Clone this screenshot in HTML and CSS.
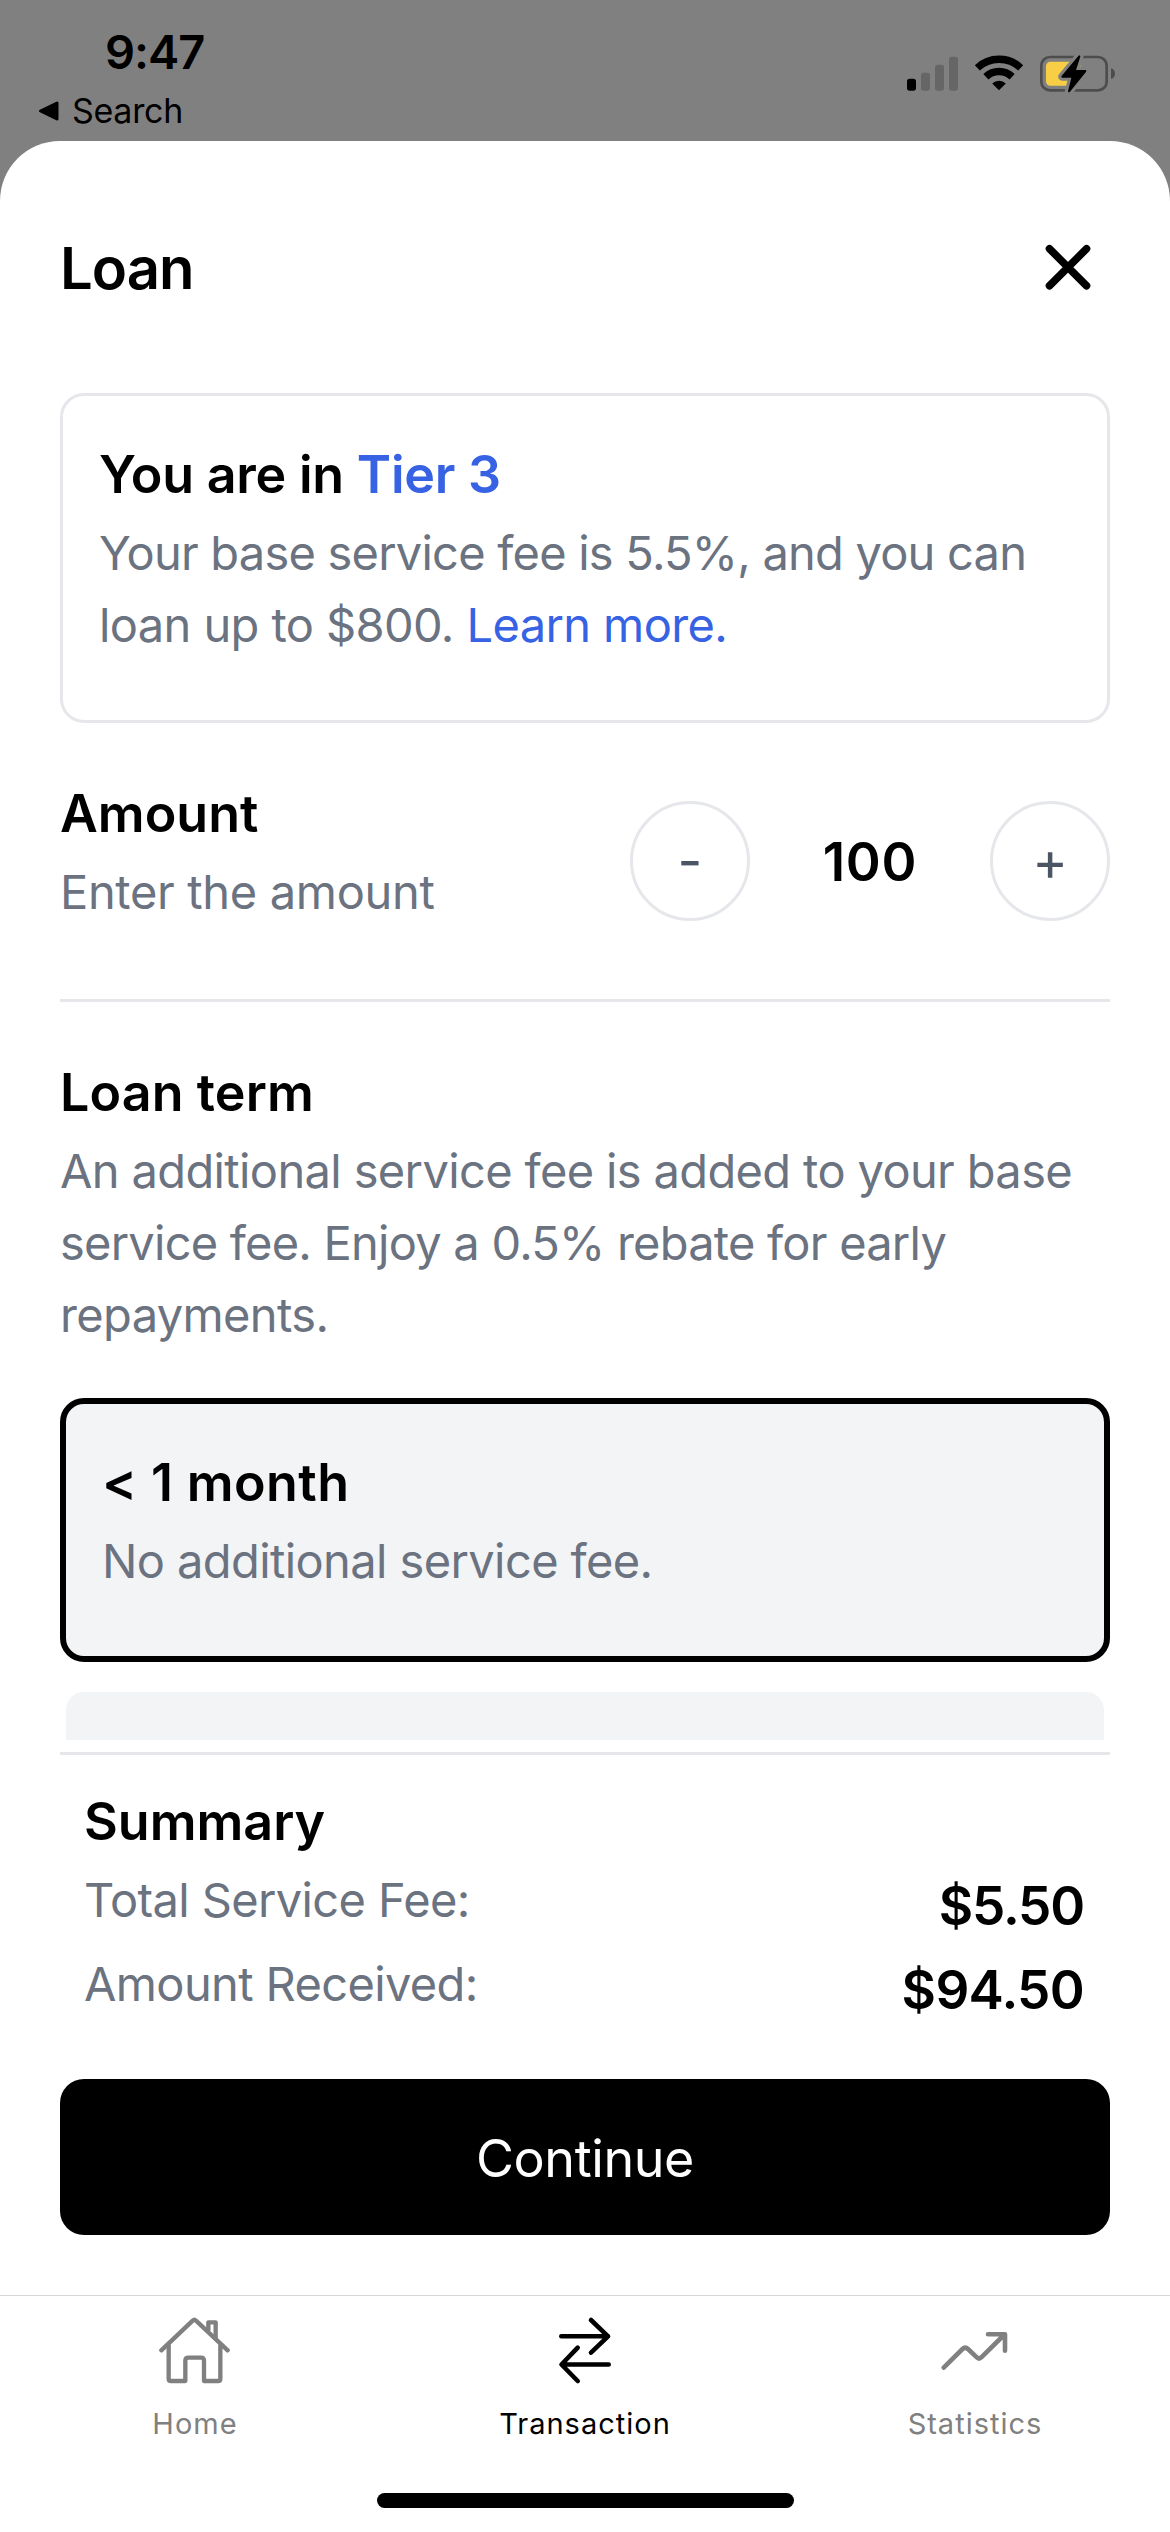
FILE: index.html
```html
<!DOCTYPE html>
<html lang="en">
<head>
<meta charset="utf-8">
<title>Loan</title>
<link rel="stylesheet" href="styles.css">
</head>
<body>
<div class="screen">
  <header class="status">
    <div class="status-left">
      <div class="time">9:47</div>
      <div class="back">
        <svg width="22" height="22" viewBox="0 0 22 22"><path d="M2.500 11 L19 3 V19 Z" fill="#000" stroke="#000" stroke-width="3" stroke-linejoin="round"/></svg>
        <span>Search</span>
      </div>
    </div>
    <svg class="status-icons" viewBox="105 160 636 126">
      <rect x="111" y="237" width="27" height="36" rx="8"/>
      <g fill="#666">
        <rect x="153" y="219" width="27" height="54" rx="8"/>
        <rect x="195" y="195" width="27" height="78" rx="8"/>
        <rect x="237" y="171" width="27" height="102" rx="8"/>
      </g>
      <g fill="none" stroke="#000" stroke-width="22">
        <path d="M322 204.500 A95 95 0 0 1 452 204.500"/>
        <path d="M347.500 231.300 A57.500 57.500 0 0 1 426.500 231.300"/>
      </g>
      <path d="M387 272 L366.500 251.500 A30 30 0 0 1 407.500 251.500 Z"/>
      <rect x="514" y="172" width="196" height="100" rx="26" fill="none" stroke="#4d4d4d" stroke-width="8"/>
      <path d="M723 206 Q735 210 735 222 Q735 234 723 238 Z" fill="#4d4d4d"/>
      <rect x="528" y="186" width="105" height="72" rx="13" fill="#f7ce46"/>
      <path d="M628 170 L577 231 H608 L597 275 L646 214 H614 Z" fill="#808080" stroke="#808080" stroke-width="25" stroke-linejoin="round"/>
      <path d="M628 170 L577 231 H608 L597 275 L646 214 H614 Z" stroke="#000" stroke-width="6" stroke-linejoin="round"/>
    </svg>
  </header>

  <main class="sheet">
    <div class="sheet-head">
      <h1>Loan</h1>
      <svg width="48" height="48" viewBox="0 0 48 48"><path d="M5.500 4.800 L42.500 41.800 M42.500 4.800 L5.500 41.800" stroke="#000" stroke-width="7.600" stroke-linecap="round"/></svg>
    </div>

    <section class="card">
      <h2 class="tier">You are in <span class="blue">Tier 3</span></h2>
      <p class="copy"><span class="fee">Your base service fee is 5.5%, and you can</span><br>loan up to $800. <span class="blue">Learn more.</span></p>
    </section>

    <section class="amount">
      <div>
        <h2>Amount</h2>
        <p class="hint">Enter the amount</p>
      </div>
      <div class="stepper">
        <button class="round">-</button>
        <span class="value">100</span>
        <button class="round">+</button>
      </div>
    </section>

    <section class="term">
      <h2 class="term-title">Loan term</h2>
      <p>An additional service fee is added to your base<br><span class="rebate">service fee. Enjoy a 0.5% rebate for early</span><br>repayments.</p>
    </section>

    <div class="options">
      <div class="option selected">
        <h2 class="month">&lt; 1 month</h2>
        <p>No additional service fee.</p>
      </div>
      <div class="option"></div>
    </div>

    <section class="summary">
      <h2>Summary</h2>
      <div class="line"><p>Total Service Fee:</p><strong>$5.50</strong></div>
      <div class="line"><p>Amount Received:</p><strong class="received">$94.50</strong></div>
    </section>

    <button class="continue">Continue</button>
  </main>

  <nav class="tabs">
    <div class="tab">
      <svg width="74" height="70" viewBox="174 138 222 210"><g fill="none" stroke="#808080" stroke-width="13" stroke-linecap="round" stroke-linejoin="round"><path d="M184 241 L278 152 Q283 147 288 152 L383 241"/><path d="M206 225 V326 Q206 333 213 333 H256 V272 Q256 263 265 263 H303 Q312 263 312 272 V333 H354 Q361 333 361 326 V225"/><path d="M325 180 V157 H347 V203"/></g></svg>
      <span>Home</span>
    </div>
    <div class="tab active">
      <svg width="74" height="70" viewBox="0 0 74 70"><path d="M13.300 20.300 H60 M43 4 L60 20.300 L43 36.600 M60.700 48.500 H14 M29.700 31.700 L13.500 48.500 L29.700 65" fill="none" stroke="#000" stroke-width="4.600" stroke-linecap="round" stroke-linejoin="round"/></svg>
      <span>Transaction</span>
    </div>
    <div class="tab">
      <svg width="74" height="70" viewBox="0 0 74 70"><path d="M5.700 51.700 L24.500 33 Q27.200 30.500 30 33 L38.500 41.200 Q41 43.700 43.600 41.200 L66.500 18.500 M50 18.200 H67 V34.800" fill="none" stroke="#808080" stroke-width="4.600" stroke-linecap="round" stroke-linejoin="round"/></svg>
      <span>Statistics</span>
    </div>
  </nav>
  <div class="home-indicator"></div>
</div>
</body>
</html>
```
FILE: styles.css
```css
* { box-sizing: border-box; margin: 0; padding: 0; }

body { background: #808080; color: #000; font-family: Inter, "Liberation Sans", sans-serif; }
svg { display: block; flex: none; }
button { font-family: inherit; }

.screen { width: 1170px; height: 2532px; display: flex; flex-direction: column; background: linear-gradient(#808080 300px, #fff 300px); overflow: hidden; }

.status { height: 141px; flex: none; display: flex; justify-content: space-between; padding: 24px 53px 0 38px; }
.time { font-size: 47px; line-height: 56px; font-weight: 600; letter-spacing: -1px; padding-left: 67px; }
.back { display: flex; align-items: center; gap: 12px; margin-top: 11px; font-size: 34px; line-height: 40px; letter-spacing: -.3px; }
.status-icons { width: 212px; height: 42px; margin-top: 29px; }

.sheet { flex: none; height: 2154px; background: #fff; border-radius: 60px 60px 0 0; padding: 91px 60px 0; }
.sheet-head { display: flex; justify-content: space-between; align-items: center; height: 72px; padding-right: 18px; }
h1 { font-size: 58px; line-height: 72px; font-weight: 600; letter-spacing: -1px; }
h2 { font-size: 52px; line-height: 84px; font-weight: 600; letter-spacing: 0; }
p { font-size: 47px; line-height: 72px; color: #6b7280; letter-spacing: -.63px; white-space: nowrap; }
.blue { color: #3662e3; }

.card { height: 330px; margin-top: 89px; border: 3px solid #e5e7eb; border-radius: 24px; padding: 37px 36px 0; }
.tier { letter-spacing: -.23px; }
.copy { letter-spacing: -.6px; }
.fee { letter-spacing: -.77px; }

.amount { display: flex; justify-content: space-between; align-items: flex-start; margin-top: 49px; padding-bottom: 71px; border-bottom: 3px solid #e5e7eb; }
.hint { letter-spacing: -.33px; }
.stepper { display: flex; align-items: center; margin-top: 29px; }
.round { width: 120px; height: 120px; border: 3px solid #e5e7eb; border-radius: 50%; background: #fff; color: #4b5563; font-size: 54px; line-height: 72px; }
.value { width: 240px; text-align: center; font-size: 53px; line-height: 80px; font-weight: 600; letter-spacing: .8px; padding-top: 2px; }

.term { margin-top: 49px; }
.term-title { letter-spacing: .1px; }
.rebate { letter-spacing: -.76px; }

.options { height: 342px; margin-top: 47px; display: flex; flex-direction: column; gap: 24px; overflow: hidden; }
.option { flex: none; height: 264px; border: 6px solid #fff; border-radius: 24px; background: #f3f4f6; padding: 37px 36px 0; }
.selected { border-color: #000; }
.selected p { letter-spacing: -.6px; }
.month { letter-spacing: .4px; }

.summary { margin-top: 12px; border-top: 3px solid #e5e7eb; padding: 25px 26px 0 24px; }
.line { display: flex; justify-content: space-between; height: 84px; }
strong { font-size: 53px; line-height: 84px; font-weight: 600; letter-spacing: -1.2px; }
.received { letter-spacing: -.7px; }

.continue { display: block; width: 100%; height: 156px; margin-top: 47px; border: 0; border-radius: 24px; background: #000; color: #fff; font-size: 52px; letter-spacing: -.4px; padding-top: 2px; }

.tabs { flex: none; height: 198px; display: flex; background: #fff; border-top: 1px solid #d8d8d8; padding-top: 20px; }
.tab { flex: 1; display: flex; flex-direction: column; align-items: center; gap: 20px; color: #808080; font-size: 29px; line-height: 36px; letter-spacing: 1px; }
.active { color: #000; }
.home-indicator { flex: none; width: 417px; height: 15px; border-radius: 8px; background: #000; align-self: center; }
```
